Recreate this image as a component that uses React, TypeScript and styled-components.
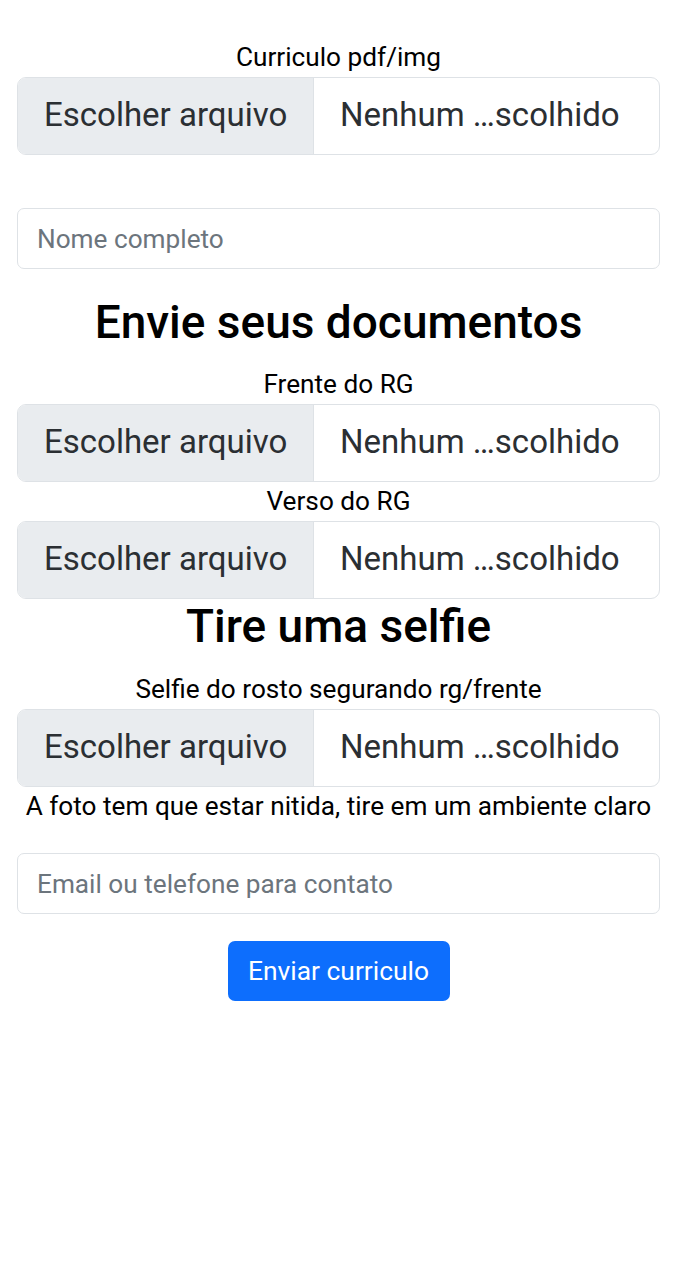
import React from "react";
import styled, { createGlobalStyle } from "styled-components";

const GlobalStyle = createGlobalStyle`
  html, body {
    margin: 0;
    padding: 0;
    background: #ffffff;
  }
  body {
    font-family: Roboto, "Liberation Sans", sans-serif;
    color: #212529;
    -webkit-font-smoothing: antialiased;
  }
  * { box-sizing: border-box; }
`;

const Form = styled.form`
  display: flex;
  flex-direction: column;
  padding: 38px 15px 0 17px;
`;

const FieldLabel = styled.label`
  display: block;
  font-size: 26.2px;
  line-height: 39px;
  text-align: center;
  color: #000000;
  white-space: nowrap;
`;

const Hint = styled.p<{ $gapBelow: number }>`
  margin: 0 0 ${(p) => p.$gapBelow}px;
  font-size: 26.2px;
  line-height: 39px;
  text-align: center;
  color: #000000;
  white-space: nowrap;
`;

const Heading = styled.h3<{ $gapBelow: number }>`
  margin: 0 0 ${(p) => p.$gapBelow}px;
  font-size: 46px;
  font-weight: 500;
  line-height: 54px;
  text-align: center;
  color: #000000;
`;

const FileField = styled.div<{ $gapBelow?: number }>`
  display: flex;
  align-items: stretch;
  height: 78px;
  border: 1px solid #dee2e6;
  border-radius: 9px;
  overflow: hidden;
  background: #ffffff;
  margin-bottom: ${(p) => p.$gapBelow ?? 0}px;
`;

const FileButton = styled.span`
  display: flex;
  align-items: center;
  width: 296px;
  padding: 0 0 3px 26px;
  background: #e9ecef;
  border-right: 1px solid #dee2e6;
  font-size: 33px;
  color: #2b2f33;
  white-space: nowrap;
`;

const FileName = styled.span`
  display: flex;
  align-items: center;
  flex: 1;
  padding: 0 0 3px 26px;
  font-size: 33px;
  color: #2b2f33;
  white-space: nowrap;
  overflow: hidden;
`;

const TextInput = styled.input<{ $gapBelow: number }>`
  display: block;
  width: 100%;
  height: 61px;
  margin: 0 0 ${(p) => p.$gapBelow}px;
  padding: 0 19px;
  border: 1px solid #dee2e6;
  border-radius: 7px;
  font-family: Roboto, "Liberation Sans", sans-serif;
  font-size: 26.2px;
  color: #212529;
  background: #ffffff;
  outline: none;

  &::placeholder {
    color: #6c757d;
  }
`;

const SubmitButton = styled.button`
  align-self: center;
  height: 60px;
  width: 222px;
  padding: 0;
  border: none;
  border-radius: 7px;
  background: #0d6efd;
  color: #ffffff;
  font-family: Roboto, "Liberation Sans", sans-serif;
  font-size: 26.4px;
  cursor: pointer;
`;

type FileProps = { gapBelow?: number };

const FilePicker: React.FC<FileProps> = ({ gapBelow }) => (
  <FileField $gapBelow={gapBelow}>
    <FileButton>Escolher arquivo</FileButton>
    <FileName>Nenhum …scolhido</FileName>
  </FileField>
);

export default function App() {
  return (
    <>
      <GlobalStyle />
      <Form onSubmit={(e) => e.preventDefault()}>
        <FieldLabel>Curriculo pdf/img</FieldLabel>
        <FilePicker gapBelow={53} />
        <TextInput type="text" placeholder="Nome completo" $gapBelow={26} />

        <Heading $gapBelow={16}>Envie seus documentos</Heading>
        <FieldLabel>Frente do RG</FieldLabel>
        <FilePicker />
        <FieldLabel>Verso do RG</FieldLabel>
        <FilePicker />

        <Heading $gapBelow={17}>Tire uma selfie</Heading>
        <FieldLabel>Selfie do rosto segurando rg/frente</FieldLabel>
        <FilePicker />
        <Hint $gapBelow={27}>A foto tem que estar nitida, tire em um ambiente claro</Hint>

        <TextInput type="text" placeholder="Email ou telefone para contato" $gapBelow={27} />
        <SubmitButton type="submit">Enviar curriculo</SubmitButton>
      </Form>
    </>
  );
}
